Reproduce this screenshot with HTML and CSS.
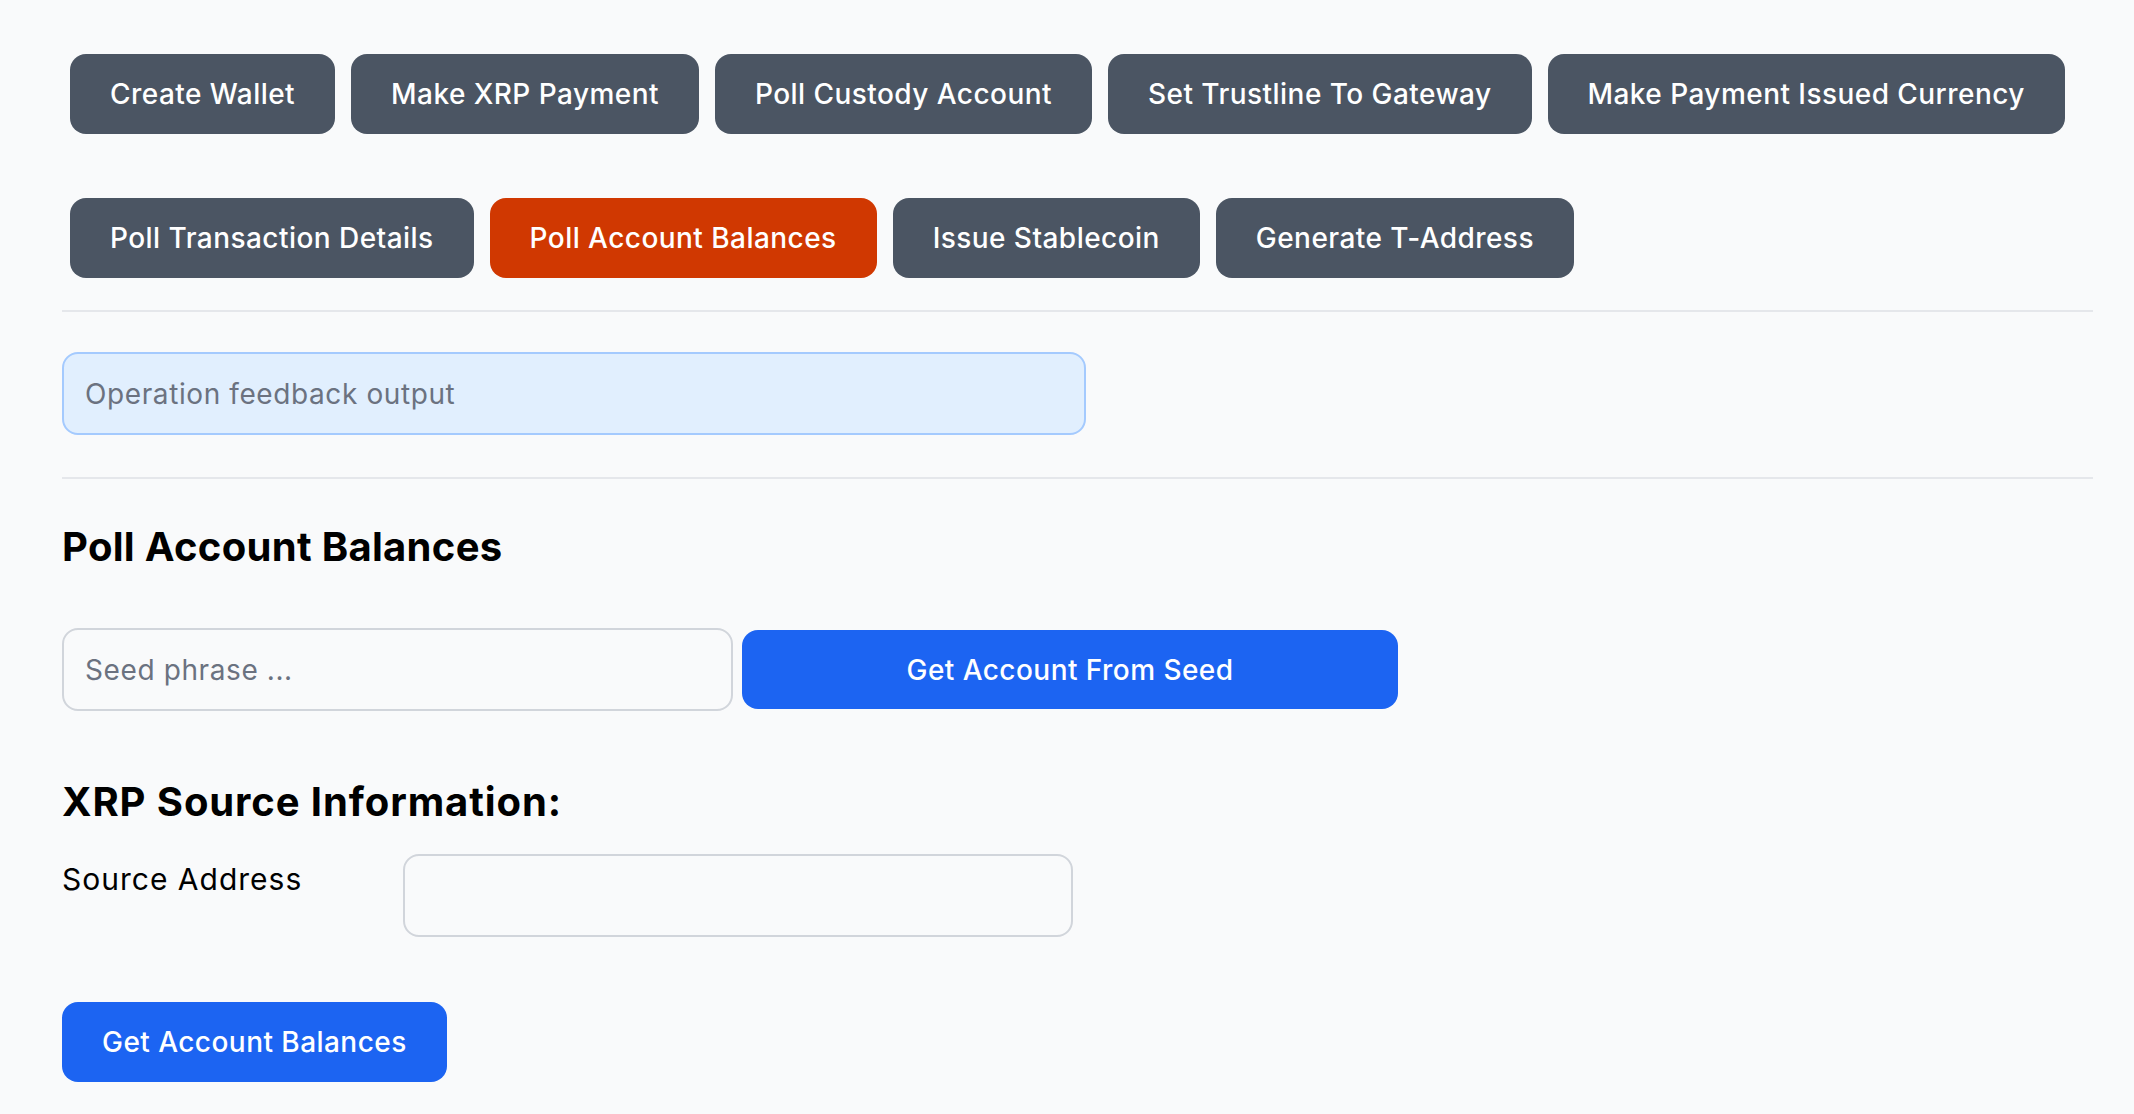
FILE: index.html
```html
<!DOCTYPE html>
<html lang="en">
<head>
<meta charset="utf-8">
<title>XRP Operations</title>
<link rel="stylesheet" href="styles.css">
</head>
<body>
<main class="page">
  <nav class="ops">
    <div class="ops-row">
      <button class="op-btn">Create Wallet</button>
      <button class="op-btn">Make XRP Payment</button>
      <button class="op-btn">Poll Custody Account</button>
      <button class="op-btn">Set Trustline To Gateway</button>
      <button class="op-btn">Make Payment Issued Currency</button>
    </div>
    <div class="ops-row">
      <button class="op-btn">Poll Transaction Details</button>
      <button class="op-btn op-btn-active">Poll Account Balances</button>
      <button class="op-btn">Issue Stablecoin</button>
      <button class="op-btn">Generate T-Address</button>
    </div>
  </nav>
  <hr class="divider">
  <div class="feedback">
    <input class="feedback-input" type="text" placeholder="Operation feedback output" readonly>
  </div>
  <hr class="divider divider-second">
  <section class="panel">
    <h2 class="panel-title">Poll Account Balances</h2>
    <div class="seed-row">
      <input class="field seed-field" type="text" placeholder="Seed phrase ...">
      <button class="primary-btn seed-btn">Get Account From Seed</button>
    </div>
    <h2 class="panel-title sub-title">XRP Source Information:</h2>
    <div class="form-row">
      <label class="form-label">Source Address</label>
      <input class="field address-field" type="text">
    </div>
    <div class="actions">
      <button class="primary-btn balances-btn">Get Account Balances</button>
    </div>
  </section>
</main>
</body>
</html>
```
FILE: styles.css
```css
* { box-sizing: border-box; }
html, body { margin: 0; padding: 0; }
body {
  background: #f9fafb;
  font-family: Inter, "Noto Sans", "Liberation Sans", sans-serif;
  color: #000;
  width: 2134px;
  min-height: 1114px;
}
.page {
  padding: 54px 41px 0 62px;
}
.ops {
  display: flex;
  flex-direction: column;
  gap: 64px;
  padding: 0 8px;
}
.ops-row {
  display: flex;
  gap: 16px;
}
.op-btn {
  font-family: inherit;
  font-size: 28px;
  font-weight: 500;
  letter-spacing: 0.45px;
  color: #fff;
  background: #4b5563;
  border: none;
  border-radius: 16px;
  height: 80px;
  padding: 0 40px;
  white-space: nowrap;
  cursor: pointer;
}
.op-btn-active { background: #d03801; }
.divider {
  margin: 32px 0 0;
  border: none;
  border-top: 2px solid #e5e7eb;
  height: 0;
}
.feedback { padding: 40px 0 42px; }
.feedback-input {
  display: block;
  width: 1024px;
  height: 83px;
  border: 2px solid #a4cafe;
  background: #e1effe;
  border-radius: 16px;
  padding: 0 21px;
  font-family: inherit;
  font-size: 28px;
  letter-spacing: 0.6px;
  color: #111827;
  outline: none;
}
.feedback-input::placeholder,
.field::placeholder { color: #6b7280; opacity: 1; }
.divider-second { margin-top: 0; }
.panel { padding-top: 44px; }
.panel-title {
  margin: 0;
  font-size: 40px;
  line-height: 48px;
  font-weight: 700;
  letter-spacing: 0.3px;
  color: #000;
}
.seed-row {
  display: flex;
  align-items: center;
  gap: 9px;
  margin-top: 57px;
}
.field {
  display: block;
  height: 83px;
  border: 2px solid #d1d5db;
  background: #f9fafb;
  border-radius: 16px;
  padding: 0 21px;
  font-family: inherit;
  font-size: 28px;
  letter-spacing: 0.6px;
  color: #111827;
  outline: none;
}
.seed-field { width: 671px; }
.primary-btn {
  font-family: inherit;
  font-size: 28px;
  font-weight: 500;
  letter-spacing: 0.45px;
  color: #fff;
  background: #1c64f2;
  border: none;
  border-radius: 16px;
  height: 80px;
  padding: 0 40px;
  white-space: nowrap;
  cursor: pointer;
}
.seed-btn { width: 656px; height: 79px; }
.sub-title { margin-top: 67px; letter-spacing: 0.9px; }
.form-row {
  display: flex;
  align-items: flex-start;
  margin-top: 28px;
}
.form-label {
  width: 341px;
  padding-top: 7px;
  font-size: 30px;
  line-height: 36px;
  font-weight: 400;
  letter-spacing: 1px;
}
.address-field { width: 670px; }
.actions { margin-top: 65px; }
```
